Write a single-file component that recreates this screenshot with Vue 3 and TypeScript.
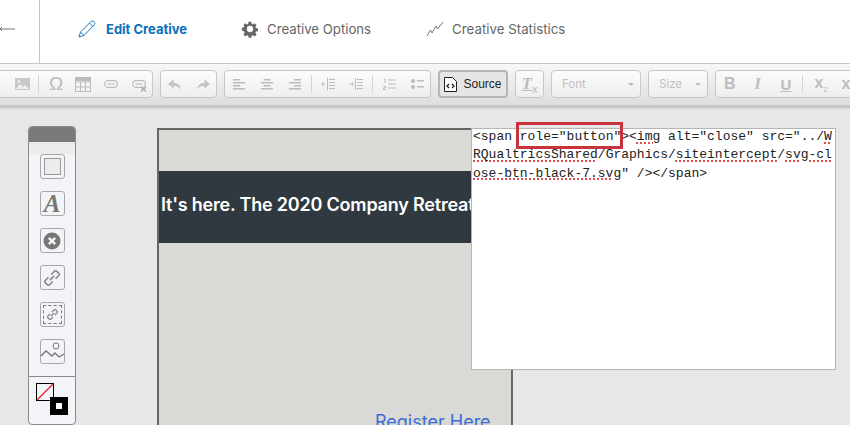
<script setup lang="ts">
const tabs = ['Creative Options']
</script>

<template>
  <div class="page">
    <header class="top">
      <div class="back"><svg width="16" height="6" viewBox="0 0 16 6"><path d="M0 3H15M0 3l2-2M0 3l2 2" stroke="#777" stroke-width="1" fill="none"/></svg></div>
      <nav class="tabs">
        <div class="tab active">
          <svg width="18" height="18" viewBox="0 0 18 18" fill="none" stroke="#1a7cc8" stroke-width="1"><path d="M1 17l1.500-5L13 1.500c1-.8 2.500-.5 3.200.3.8.9.8 2.100 0 3L6 15.500zM2.500 12L6 15.500M11.500 3l3.500 3.500"/></svg>
          <span>Edit Creative</span>
        </div>
        <div class="tab opts" v-for="t in tabs" :key="t">
          <svg width="18" height="18" viewBox="0 0 18 18"><path fill="#666" fill-rule="evenodd" d="M7.500 1h3l.4 2.300 1.400.6 1.900-1.300 2.100 2.100-1.300 1.900.6 1.400 2.300.4v3l-2.300.4-.6 1.400 1.300 1.900-2.100 2.100-1.900-1.300-1.400.6-.4 2.300h-3l-.4-2.300-1.400-.6-1.900 1.300-2.100-2.100 1.300-1.900-.6-1.400L-.1 10.500v-3l2.300-.4.6-1.400L1.500 4.800l2.100-2.100 1.900 1.300 1.400-.6zM9 5.500a3.500 3.500 0 100 7 3.500 3.500 0 000-7z" transform="translate(.9 .9) scale(.9)"/></svg>
          <span>{{ t }}</span>
        </div>
        <div class="tab stats">
          <svg width="18" height="16" viewBox="0 0 18 16" fill="none" stroke="#777" stroke-width="1"><path d="M1 15l3.500-6 1.500 3 4-7 1.500 3L17 1"/></svg>
          <span>Creative Statistics</span>
        </div>
      </nav>
    </header>

    <div class="toolbar">
      <div class="group g1">
        <svg class="ic-img" width="15" height="12" viewBox="0 0 15 12"><rect width="15" height="12" fill="#c9c9c9"/><path d="M1 11l4-5 3 3 2-2 4 4z" fill="#eee"/><circle cx="4" cy="3.500" r="1.500" fill="#eee"/></svg>
        <i class="sep s1"></i>
        <span class="omega">Ω</span>
        <svg class="ic-table" width="16" height="15" viewBox="0 0 16 15" fill="none" stroke="#bbb"><rect x=".5" y=".5" width="15" height="14"/><path d="M.5 5h15M.5 10h15M5.500 5v9.500M10.500 5v9.500"/><rect x=".5" y=".5" width="15" height="3" fill="#bbb"/></svg>
        <svg class="ic-link" width="14" height="8" viewBox="0 0 14 8" fill="none" stroke="#bbb" stroke-width="1.100"><rect x=".6" y=".6" width="12.800" height="6.800" rx="3.400"/><path d="M3.500 4h7"/></svg>
        <svg class="ic-unlink" width="15" height="12" viewBox="0 0 15 12" fill="none" stroke="#bbb" stroke-width="1.100"><rect x=".6" y=".6" width="12.800" height="6.800" rx="3.400"/><path d="M3.500 4h7"/><path d="M9 7l5 4.500M14 7l-5 4.500" stroke="#aaa" stroke-width="1.400"/></svg>
      </div>
      <div class="group g2">
        <svg width="14" height="11" viewBox="0 0 15 11"><path d="M6 0L0 5l6 5V7c4 0 6 1 8 4-1-5-3-7-8-7.500z" fill="#c4c4c4"/></svg>
        <svg width="14" height="11" viewBox="0 0 15 11"><path d="M9 0l6 5-6 5V7c-4 0-6 1-8 4 1-5 3-7 8-7.500z" fill="#c4c4c4"/></svg>
      </div>
      <div class="group g3">
        <svg width="12" height="11" viewBox="0 0 12 11" fill="#bbb"><path d="M0 0h7v1.500H0zM0 3h12v1.500H0zM0 6h7v1.500H0zM0 9h12v1.500H0z"/></svg>
        <svg class="m16" width="12" height="11" viewBox="0 0 12 11" fill="#bbb"><path d="M2.500 0h7v1.500h-7zM0 3h12v1.500H0zM2.500 6h7v1.500h-7zM0 9h12v1.500H0z"/></svg>
        <svg class="m16" width="12" height="11" viewBox="0 0 12 11" fill="#bbb"><path d="M5 0h7v1.500H5zM0 3h12v1.500H0zM5 6h7v1.500H5zM0 9h12v1.500H0z"/></svg>
        <i class="sep s2"></i>
        <svg width="14" height="12" viewBox="0 0 14 12" fill="none" stroke="#bbb"><path d="M6.500 0v12M8 1.500h6M8 4.500h6M8 7.500h6M8 10.500h6M0 6h4M2 4v4"/></svg>
        <svg class="m14" width="14" height="12" viewBox="0 0 14 12" fill="none" stroke="#bbb"><path d="M6.500 0v12M8 1.500h6M8 4.500h6M8 7.500h6M8 10.500h6M0 6h4M3 4l1.500 2L3 8"/></svg>
        <i class="sep s3"></i>
        <svg width="13" height="12" viewBox="0 0 13 12" fill="none" stroke="#bbb"><path d="M1 1.500l1-.5v4M5 2h8M5 6h8M5 10h8M.5 8.500h2v1.500h-2v1.500h2"/></svg>
        <svg class="m15" width="13" height="11" viewBox="0 0 13 11" fill="#bbb"><circle cx="2" cy="2" r="2"/><circle cx="2" cy="8" r="2"/><path d="M6 1h7v1.500H6zM6 7h7v1.500H6z"/></svg>
      </div>
      <div class="group source">
        <svg width="13" height="15" viewBox="0 0 13 15" fill="none" stroke="#222"><path d="M.5.500h8l4 4v10H.5z" fill="#fff"/><path d="M5 7L3 9l2 2M8 7l2 2-2 2" stroke-width="1.300"/></svg>
        <span>Source</span>
      </div>
      <div class="group tx"><span class="t">T</span><span class="x">x</span></div>
      <div class="group select font"><span>Font</span><b></b></div>
      <div class="group select size"><span>Size</span><b></b></div>
      <div class="group g4">
        <span class="bi b">B</span>
        <span class="bi i">I</span>
        <span class="bi u">U</span>
        <i class="sep s4"></i>
        <span class="bi x2">x<sub>2</sub></span>
        <span class="bi xx">x</span>
      </div>
    </div>

    <main class="canvas">
      <aside class="palette">
        <div class="handle"></div>
        <div class="strip"></div>
        <div class="tools">
          <button><span class="sq"></span></button>
          <button><span class="aa">A</span></button>
          <button><svg width="18" height="18" viewBox="0 0 18 18"><circle cx="9" cy="9" r="8.500" fill="#777"/><path d="M5.800 5.800l6.400 6.400M12.200 5.800l-6.400 6.400" stroke="#f3f4f8" stroke-width="2.400"/></svg></button>
          <button><svg width="16" height="16" viewBox="0 0 16 16" fill="none" stroke="#888" stroke-width="1.600"><g transform="rotate(-45 8 8)"><path d="M6 5H0v6h6M10 5h6v6h-6M5 8h6"/></g></svg></button>
          <button class="dash"><span><svg width="11" height="11" viewBox="0 0 16 16" fill="none" stroke="#888" stroke-width="1.900"><g transform="rotate(-45 8 8)"><path d="M6 5H0v6h6M10 5h6v6h-6M5 8h6"/></g></svg></span></button>
          <button class="img"><svg width="23" height="22" viewBox="0 0 23 22" fill="none" stroke="#777"><circle cx="15" cy="6" r="3"/><path d="M0 16l5-5 6 5 3-3 4 4 5-3" stroke-width="1.300"/></svg></button>
        </div>
        <div class="colors">
          <svg class="stroke" width="18" height="18" viewBox="0 0 18 18"><rect x=".5" y=".5" width="17" height="17" fill="#f3f4f8" stroke="#000"/><path d="M1 17L17 1" stroke="#e0202c" stroke-width="1.300"/></svg>
          <span class="fill"><i></i></span>
        </div>
      </aside>

      <section class="creative">
        <div class="band"><span>It's here. The 2020 Company Retreat</span></div>
        <a class="register">Register Here</a>
        <div class="source-box">
          <pre class="code">&lt;span <span class="mark">role="button"</span>&gt;&lt;<u>img</u> alt="close" src="../<u>W</u>
<u>RQualtricsShared</u>/Graphics/<u>siteintercept</u>/<u>svg-cl</u>
<u>ose-btn-black-7.svg</u>" /&gt;&lt;/span&gt;</pre>
        </div>
      </section>
    </main>
  </div>
</template>

<style>
html, body { margin: 0; overflow: hidden; }
</style>

<style scoped>
.page { width: 850px; height: 425px; overflow: hidden; background: #e7e7e7; font-family: "Inter", "Liberation Sans", sans-serif; display: flex; flex-direction: column; }
.top { height: 63px; flex: none; background: #fff; border-bottom: 1px solid #c8c8c8; display: flex; }
.back { width: 39px; border-right: 1px solid #c4c4c4; display: flex; align-items: center; padding-bottom: 6px; height: 57px; }
.tabs { display: flex; align-items: center; padding: 0 0 6px 38px; }
.tab { display: flex; align-items: center; gap: 10px; color: #666; font-size: 13.200px; margin-right: 54px; }
.tab.active { color: #0a6fbd; font-weight: 700; font-size: 13px; }
.tab.opts { gap: 8px; margin-right: 55px; }
.tab.stats { gap: 8px; font-size: 13.300px; }
.toolbar { height: 44px; flex: none; box-sizing: border-box; background: linear-gradient(#f7f7f7, #dedede); border-bottom: 3px solid #c6c6c6; box-shadow: 0 1px 2px rgba(0,0,0,.08); display: flex; gap: 7px; padding-top: 6px; margin-left: -11px; }
.group { height: 28px; box-sizing: border-box; border: 1px solid #c6c6c6; border-radius: 4px; background: linear-gradient(#fbfbfb, #eeeeee); display: flex; align-items: center; flex: none; }
.sep { width: 1px; height: 18px; background: #d4d4d4; flex: none; }
.g1 { width: 164px; padding-left: 25px; }
.s1 { margin-left: 8px; }
.omega { font: 19px "Liberation Sans", sans-serif; color: #bbb; margin-left: 10px; width: 15px; }
.ic-table { margin-left: 11px; }
.ic-link { margin-left: 13px; }
.ic-unlink { margin-left: 14px; margin-top: 3px; }
.g2 { width: 57px; gap: 14px; justify-content: center; }
.g3 { width: 207px; padding-left: 8px; }
.m16 { margin-left: 16px; }
.m14 { margin-left: 14px; }
.m15 { margin-left: 15px; }
.s2 { margin: 0 9px 0 10px; }
.s3 { margin: 0 10px 0 9px; }
.source { width: 70px; gap: 6px; justify-content: center; background: #e6e6e6; border: 2px solid #b5b5b5; font: 12px "Liberation Sans", sans-serif; color: #222; }
.tx { width: 29px; justify-content: center; color: #bbb; }
.tx .t { font: italic 700 17px "Liberation Serif", serif; text-decoration: underline; }
.tx .x { font: 11px "Liberation Sans", sans-serif; margin-top: 9px; }
.select { justify-content: space-between; padding: 0 6px 0 10px; font-size: 11.500px; color: #c0c0c0; }
.select b { width: 0; height: 0; border: 3px solid transparent; border-top-color: #bbb; border-bottom: 0; }
.font { width: 90px; }
.size { width: 60px; }
.g4 { width: 146px; padding-left: 8px; font: 700 16px "Liberation Sans", sans-serif; color: #bdbdbd; }
.bi.i { font-family: "Liberation Serif", serif; font-style: italic; margin-left: 19px; width: 12px; }
.bi.u { text-decoration: underline; font-size: 15px; margin-left: 14px; }
.s4 { margin-left: 11px; }
.bi.x2 { margin-left: 11px; width: 20px; }
.bi.xx { margin-left: 7px; }
.bi sub { font-size: 8px; font-weight: 400; }
.canvas { flex: 1; position: relative; min-height: 0; }
.palette { position: absolute; left: 28px; top: 18px; width: 48px; height: 299px; box-sizing: border-box; background: #f3f4f8; border: 1px solid #8a8a8a; border-radius: 4px; display: flex; flex-direction: column; overflow: hidden; }
.handle { height: 15px; background: #7a7a7a; flex: none; }
.strip { height: 12px; background: #ececec; flex: none; }
.tools { display: flex; flex-direction: column; align-items: center; gap: 12px; height: 222px; flex: none; }
.tools button { width: 25px; height: 25px; padding: 0; box-sizing: border-box; border: 1px solid #a8a8a8; border-radius: 3px; background: #f3f4f8; display: flex; align-items: center; justify-content: center; }
.sq { display: block; width: 17px; height: 17px; box-sizing: border-box; border: 1px solid #999; background: #ececec; }
.aa { font: italic 700 25px/23px "Liberation Serif", serif; color: #777; }
.dash span { width: 19px; height: 19px; border: 1px dashed #777; display: flex; align-items: center; justify-content: center; box-sizing: border-box; }
.tools .img { overflow: hidden; align-items: flex-start; }
.colors { flex: 1; border-top: 1px solid #8a8a8a; position: relative; }
.stroke { position: absolute; left: 7px; top: 6px; }
.fill { position: absolute; left: 21px; top: 20px; width: 18px; height: 18px; background: #000; display: flex; align-items: center; justify-content: center; }
.fill i { width: 6px; height: 6px; background: #fff; }
.creative { position: absolute; left: 157px; top: 20px; width: 356px; height: 320px; box-sizing: border-box; background: #d9dad5; border: 2px solid #666; }
.band { position: absolute; left: 0; right: 0; top: 41px; height: 72px; background: #303940; color: #fff; display: flex; align-items: center; padding: 0 0 6px 2px; box-sizing: border-box; font-size: 18px; font-weight: 600; white-space: nowrap; overflow: hidden; letter-spacing: -.2px; }
.register { position: absolute; left: 216px; top: 281px; font-size: 18px; color: #3f6bd6; }
.source-box { position: absolute; left: 312px; top: -2px; width: 365px; height: 242px; box-sizing: border-box; background: #fff; border: 1px solid #b4b4b4; }
.code { margin: 0; padding: 0 0 0 1px; font: 13px/18.300px "Liberation Mono", monospace; color: #222; position: relative; top: -1px; }
.code u { text-decoration: underline dotted #e05050 2px; text-underline-offset: 2px; }
.mark { position: relative; }
.mark::after { content: ""; position: absolute; left: -4px; right: -2px; top: -7px; bottom: -5px; border: 3px solid #c8343c; }
</style>
